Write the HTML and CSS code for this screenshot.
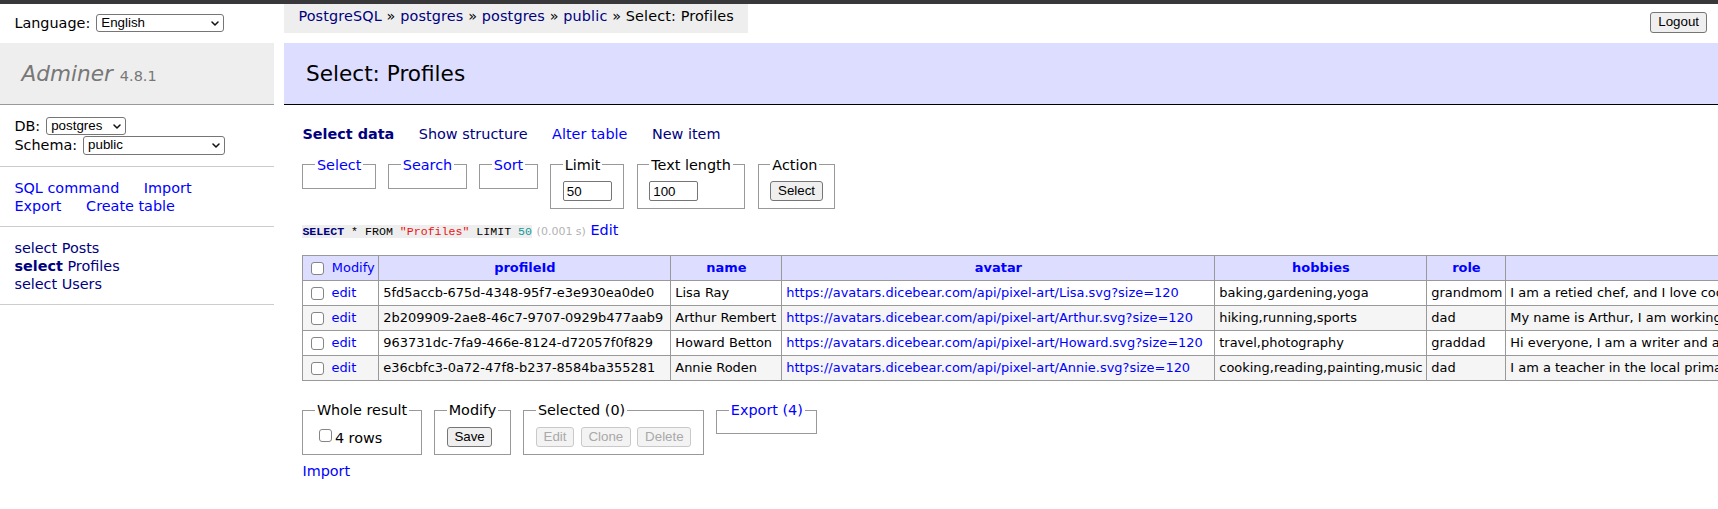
FILE: index.html
```html
<!DOCTYPE html>
<html lang="en">
<head>
<meta charset="utf-8">
<title>Select: Profiles - Adminer</title>
<link rel="stylesheet" href="styles.css">
</head>
<body>
<div class="chrome-bar"></div>
<div class="layout">
  <aside class="menu">
    <form class="lang">
      <span class="lang-label">Language:</span>
      <span class="select-wrap sel-lang">
        <select><option>English</option></select>
        <svg class="chev" width="8" height="5" viewBox="0 0 8 5"><path d="M1 1 L4 4 L7 1" fill="none" stroke="#111" stroke-width="1.5" stroke-linecap="round" stroke-linejoin="round"/></svg>
      </span>
    </form>
    <h1 class="logo"><a class="logo-link" href="#">Adminer</a> <span class="version">4.8.1</span></h1>
    <form class="dbs">
      <div class="dbs-row">
        <span>DB:</span>
        <span class="select-wrap sel-db">
          <select><option>postgres</option></select>
          <svg class="chev" width="8" height="5" viewBox="0 0 8 5"><path d="M1 1 L4 4 L7 1" fill="none" stroke="#111" stroke-width="1.5" stroke-linecap="round" stroke-linejoin="round"/></svg>
        </span>
      </div>
      <div class="dbs-row">
        <span>Schema:</span>
        <span class="select-wrap sel-schema">
          <select><option>public</option></select>
          <svg class="chev" width="8" height="5" viewBox="0 0 8 5"><path d="M1 1 L4 4 L7 1" fill="none" stroke="#111" stroke-width="1.5" stroke-linecap="round" stroke-linejoin="round"/></svg>
        </span>
      </div>
    </form>
    <div class="menu-links">
      <div><a class="lnk gap" href="#">SQL command</a> <a class="lnk" href="#">Import</a></div>
      <div><a class="lnk gap" href="#">Export</a> <a class="lnk" href="#">Create table</a></div>
    </div>
    <ul class="tables">
      <li><a class="visited" href="#">select</a> <a class="visited" href="#">Posts</a></li>
      <li><a class="visited active" href="#">select</a> <a class="visited" href="#">Profiles</a></li>
      <li><a class="visited" href="#">select</a> <a class="visited" href="#">Users</a></li>
    </ul>
  </aside>

  <main class="main">
    <div class="topline">
      <p class="breadcrumb"><a class="visited" href="#">PostgreSQL</a> » <a class="visited" href="#">postgres</a> » <a class="visited" href="#">postgres</a> » <a class="visited" href="#">public</a> » Select: Profiles</p>
      <button class="btn logout" type="button">Logout</button>
    </div>
    <h2 class="title">Select: Profiles</h2>
    <div class="content">
      <p class="links">
        <a class="visited active gap" href="#">Select data</a>
        <a class="visited gap" href="#">Show structure</a>
        <a class="lnk gap" href="#">Alter table</a>
        <a class="visited" href="#">New item</a>
      </p>
      <form class="controls">
        <fieldset><legend><a class="lnk" href="#">Select</a></legend></fieldset>
        <fieldset><legend><a class="lnk" href="#">Search</a></legend></fieldset>
        <fieldset><legend><a class="lnk" href="#">Sort</a></legend></fieldset>
        <fieldset><legend>Limit</legend><input class="field" type="text" value="50"></fieldset>
        <fieldset><legend>Text length</legend><input class="field" type="text" value="100"></fieldset>
        <fieldset><legend>Action</legend><button class="btn" type="button">Select</button></fieldset>
      </form>
      <p class="sql"><code class="code"><b class="kw">SELECT</b> * FROM <span class="str">"Profiles"</span> LIMIT <span class="num">50</span></code> <span class="time">(0.001 s)</span> <a class="lnk" href="#">Edit</a></p>

      <table class="data">
        <thead>
          <tr>
            <th class="c-mod"><input class="check" type="checkbox"> <a class="lnk plain" href="#">Modify</a></th>
            <th class="c-id"><a class="lnk" href="#">profileId</a></th>
            <th class="c-name"><a class="lnk" href="#">name</a></th>
            <th class="c-avatar"><a class="lnk" href="#">avatar</a></th>
            <th class="c-hob"><a class="lnk" href="#">hobbies</a></th>
            <th class="c-role"><a class="lnk" href="#">role</a></th>
            <th class="c-bio"><a class="lnk" href="#">description</a></th>
          </tr>
        </thead>
        <tbody>
          <tr>
            <td><input class="check" type="checkbox"> <a class="lnk" href="#">edit</a></td>
            <td>5fd5accb-675d-4348-95f7-e3e930ea0de0</td>
            <td>Lisa Ray</td>
            <td><a class="lnk" href="#">https://avatars.dicebear.com/api/pixel-art/Lisa.svg?size=120</a></td>
            <td>baking,gardening,yoga</td>
            <td>grandmom</td>
            <td>I am a retied chef, and I love cooking for my family and friends. I also enjoy gardening and yoga…</td>
          </tr>
          <tr>
            <td><input class="check" type="checkbox"> <a class="lnk" href="#">edit</a></td>
            <td>2b209909-2ae8-46c7-9707-0929b477aab9</td>
            <td>Arthur Rembert</td>
            <td><a class="lnk" href="#">https://avatars.dicebear.com/api/pixel-art/Arthur.svg?size=120</a></td>
            <td>hiking,running,sports</td>
            <td>dad</td>
            <td>My name is Arthur, I am working as an engineer and I love hiking and running with my kids on…</td>
          </tr>
          <tr>
            <td><input class="check" type="checkbox"> <a class="lnk" href="#">edit</a></td>
            <td>963731dc-7fa9-466e-8124-d72057f0f829</td>
            <td>Howard Betton</td>
            <td><a class="lnk" href="#">https://avatars.dicebear.com/api/pixel-art/Howard.svg?size=120</a></td>
            <td>travel,photography</td>
            <td>graddad</td>
            <td>Hi everyone, I am a writer and a photographer. I love to travel around the world with my family…</td>
          </tr>
          <tr>
            <td><input class="check" type="checkbox"> <a class="lnk" href="#">edit</a></td>
            <td>e36cbfc3-0a72-47f8-b237-8584ba355281</td>
            <td>Annie Roden</td>
            <td><a class="lnk" href="#">https://avatars.dicebear.com/api/pixel-art/Annie.svg?size=120</a></td>
            <td>cooking,reading,painting,music</td>
            <td>dad</td>
            <td>I am a teacher in the local primary school. I love cooking, reading, painting and music with kids…</td>
          </tr>
        </tbody>
      </table>

      <div class="footer">
        <fieldset><legend>Whole result</legend><label class="rows"><input class="check" type="checkbox">4 rows</label></fieldset>
        <fieldset><legend>Modify</legend><div class="btn-row"><button class="btn" type="button">Save</button></div></fieldset>
        <fieldset><legend>Selected (0)</legend><div class="btn-row"><button class="btn" type="button" disabled>Edit</button><button class="btn" type="button" disabled>Clone</button><button class="btn" type="button" disabled>Delete</button></div></fieldset>
        <fieldset><legend><a class="lnk" href="#">Export (4)</a></legend></fieldset>
      </div>
      <p class="import"><a class="lnk" href="#">Import</a></p>
    </div>
  </main>
</div>
</body>
</html>
```

FILE: styles.css
```css
html, body {
  overflow: hidden;
}

body {
  margin: 0;
  font-family: "DejaVu Sans", Verdana, sans-serif;
  font-size: 14.4px;
  line-height: 18px;
  color: #000;
  background: #fff;
}

a {
  text-decoration: none;
}

.lnk { color: #0000ff; }
.visited { color: #000080; }
.active { font-weight: bold; }
.gap { margin-right: 20px; }

.chrome-bar {
  height: 4px;
  background: #38383b;
}

.layout {
  display: grid;
  grid-template-columns: 274px minmax(0, 1fr);
  column-gap: 10px;
  align-items: start;
}

/* ---------- sidebar ---------- */
.lang {
  box-sizing: border-box;
  height: 34.3px;
  margin-bottom: 4.5px;
  padding: 4.3px 14.4px 0;
  display: flex;
  align-items: center;
  gap: 6px;
}

.select-wrap {
  position: relative;
  display: inline-block;
}

.select-wrap select {
  -webkit-appearance: none;
  appearance: none;
  display: block;
  box-sizing: border-box;
  height: 18.4px;
  margin: 0;
  padding: 0 18px 0 4px;
  border: 1px solid #767676;
  border-radius: 3px;
  background: #fff;
  color: #000;
  font-family: "Liberation Sans", Arial, sans-serif;
  font-size: 13.33px;
  line-height: 16px;
}

.select-wrap .chev {
  position: absolute;
  right: 5px;
  top: 7px;
  pointer-events: none;
}

.sel-lang select { width: 128px; }
.sel-db select { width: 80px; height: 18px; }
.sel-schema select { width: 142px; }

.logo {
  margin: 0;
  padding: 17.28px 21.6px;
  font-size: 21.6px;
  line-height: 27px;
  font-weight: normal;
  color: #777;
  background: #eee;
  border-bottom: 1px solid #999;
}

.logo-link {
  color: #777;
  font-style: italic;
}

.version {
  font-size: 67%;
  line-height: 14px;
  color: #777;
}

.dbs {
  margin: 0;
  padding: 11.52px 14.4px;
  border-bottom: 1px solid #ccc;
}

.dbs-row {
  display: flex;
  align-items: center;
  gap: 6px;
  height: 19px;
}

.menu-links {
  padding: 11.52px 14.4px;
  border-bottom: 1px solid #ccc;
}

.tables {
  list-style: none;
  margin: 0;
  padding: 11.52px 14.4px;
  border-bottom: 1px solid #ccc;
}

/* ---------- main ---------- */
.main {
  overflow: hidden;
  min-width: 0;
}

.topline {
  display: flex;
  align-items: flex-start;
  height: 38.8px;
}

.breadcrumb {
  margin: 0;
  height: 28.8px;
  line-height: 25.92px;
  padding: 0 14.4px;
  background: #eee;
  white-space: nowrap;
  letter-spacing: 0.13px;
}

.btn {
  box-sizing: border-box;
  height: 20px;
  margin: 0;
  padding: 0 6.7px;
  border: 1px solid #767676;
  border-radius: 3px;
  background: #efefef;
  color: #000;
  font-family: "Liberation Sans", Arial, sans-serif;
  font-size: 13.33px;
  line-height: 18px;
}

.btn:disabled {
  color: #a9a9a9;
  background: #f3f3f3;
  border-color: #c9c9c9;
}

.logout {
  margin-left: auto;
  margin-top: 8px;
  margin-right: 11px;
  height: 20.5px;
  padding: 0 7px;
}

.title {
  margin: 0 0 20px;
  padding: 17.28px 20px 17.28px 22px;
  font-size: 21.6px;
  line-height: 27px;
  font-weight: normal;
  background: #ddf;
  border-bottom: 1px solid #000;
}

.content {
  padding-left: 18.4px;
}

.links {
  margin: 0;
  white-space: nowrap;
}

fieldset {
  margin: 0;
  padding: 7.2px 11.5px;
  border: 1px solid #999;
  min-width: 0;
}

legend {
  padding: 0 2px;
  line-height: 18px;
}

.controls {
  display: flex;
  align-items: flex-start;
  gap: 12.5px;
  margin: 12.5px 0 0;
}

.field {
  display: block;
  box-sizing: border-box;
  width: 49px;
  height: 20px;
  margin: 0;
  padding: 0 3px;
  border: 1px solid #767676;
  border-radius: 2px;
  font-family: "Liberation Sans", Arial, sans-serif;
  font-size: 13.33px;
  color: #000;
}

.controls .btn { display: block; }

.sql {
  margin: 12px 0 0;
  white-space: nowrap;
}

.code {
  font-family: "Liberation Mono", "Courier New", monospace;
  font-size: 11.6px;
  background: #eee;
}

.kw { color: #000080; }
.str { color: #ee1111; }
.num { color: #119999; }

.time {
  color: #b3b3b3;
  font-size: 11px;
}

/* ---------- table ---------- */
.data {
  margin-top: 13.8px;
  border-collapse: separate;
  border-spacing: 0;
  border-top: 1px solid #999;
  border-left: 1px solid #999;
  table-layout: fixed;
  width: 1964px;
  font-size: 12.96px;
  line-height: 16px;
}

.data th,
.data td {
  box-sizing: border-box;
  height: 25px;
  padding: 0 3.9px;
  border-right: 1px solid #999;
  border-bottom: 1px solid #999;
  white-space: nowrap;
  overflow: hidden;
  vertical-align: middle;
  text-align: left;
}

.data th {
  background: #ddf;
  text-align: center;
  font-weight: bold;
}

.data th.c-mod {
  text-align: left;
}

.plain { font-weight: normal; }

.data tbody tr:nth-child(2n) { background: #f5f5f5; }

.c-mod { width: 76px; }
.c-id { width: 292px; }
.c-name { width: 111px; }
.c-avatar { width: 433px; }
.c-hob { width: 212px; }
.c-role { width: 79px; }
.c-bio { width: 760px; }

.check {
  -webkit-appearance: none;
  appearance: none;
  box-sizing: border-box;
  width: 13px;
  height: 13px;
  margin: 3px 3px 3px 4px;
  border: 1px solid #858585;
  border-radius: 3px;
  background: #fff;
  vertical-align: middle;
}

/* ---------- footer ---------- */
.footer {
  display: flex;
  align-items: flex-start;
  gap: 12.5px;
  margin-top: 20px;
}

.rows {
  display: block;
  white-space: nowrap;
}

.rows .check {
  vertical-align: -2px;
}

.btn-row {
  display: flex;
  gap: 6.5px;
  margin-top: 1px;
}

.import {
  margin: 7px 0 0;
}
```
